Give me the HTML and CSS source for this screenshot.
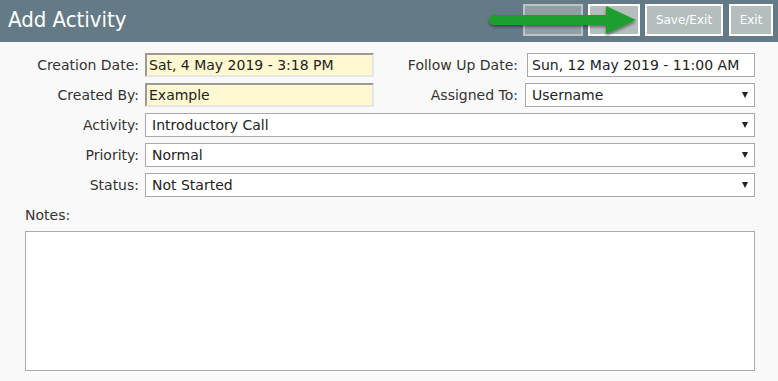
FILE: index.html
```html
<!DOCTYPE html>
<html lang="en">
<head>
    <meta charset="UTF-8">
    <meta name="viewport" content="width=device-width, initial-scale=1.0">
    <title>Add Activity</title>
    <link rel="stylesheet" href="styles.css">
</head>
<body>

    <header class="topbar">
        <h1 class="title">Add Activity</h1>
        <div class="actions">
            <button class="btn btn-faded btn-one"></button>
            <button class="btn btn-two"></button>
            <button class="btn btn-save">Save/Exit</button>
            <button class="btn btn-exit">Exit</button>
        </div>
        <!-- pointer drawn over the buttons -->
        <svg class="pointer" width="160" height="42" viewBox="0 0 160 42">
            <defs>
                <filter id="shade" x="-10%" y="-30%" width="120%" height="160%">
                    <feDropShadow dx="0" dy="2" stdDeviation="1.5" flood-color="#000" flood-opacity="0.45"/>
                </filter>
            </defs>
            <g filter="url(#shade)" fill="#1f9f2f">
                <path d="M14 15 H128 V25 H14 A5 5 0 0 1 14 15 Z"/>
                <polygon points="126,6 156,20 126,34"/>
            </g>
        </svg>
    </header>

    <main class="form">
        <div class="grid">
            <div class="lbl">Creation Date:</div>
            <div class="field field-ro">Sat, 4 May 2019 - 3:18 PM</div>
            <div class="lbl lbl-right">Follow Up Date:</div>
            <div class="field">Sun, 12 May 2019 - 11:00 AM</div>

            <div class="lbl">Created By:</div>
            <div class="field field-ro">Example</div>
            <div class="lbl lbl-right">Assigned To:</div>
            <div class="field select select-shift">Username</div>

            <div class="lbl">Activity:</div>
            <div class="field select wide">Introductory Call</div>

            <div class="lbl">Priority:</div>
            <div class="field select wide">Normal</div>

            <div class="lbl">Status:</div>
            <div class="field select wide">Not Started</div>
        </div>

        <section class="notes">
            <div class="notes-label">Notes:</div>
            <textarea class="notes-box"></textarea>
        </section>
    </main>

</body>
</html>
```

FILE: styles.css
```css
html {
    font-size: 14px;
}

body {
    margin: 0;
    background-color: #f9f9f9;
    color: #333;
    font-family: "DejaVu Sans", Verdana, sans-serif;
}

.topbar {
    position: relative;
    height: 42px;
    background-color: #647b87;
    display: flex;
    justify-content: space-between;
}

.title {
    margin: 0;
    padding-left: 8px;
    font-family: "DejaVu Sans Condensed", "DejaVu Sans", sans-serif;
    font-size: 22px;
    font-weight: normal;
    line-height: 39px;
    color: #fff;
}

.actions {
    display: flex;
    gap: 5px;
    padding: 4px 5px 0 0;
}

.btn {
    box-sizing: border-box;
    height: 32px;
    padding: 0;
    border: 2px solid #fff;
    background-color: #b4bebd;
    color: #fff;
    font-family: "DejaVu Sans", Verdana, sans-serif;
    font-size: 12px;
}

.btn-faded {
    opacity: 0.55;
}

.btn-one {
    width: 60px;
}

.btn-two {
    width: 52px;
}

.btn-save {
    width: 78px;
}

.btn-exit {
    width: 44px;
    margin-left: 1px;
}

.pointer {
    position: absolute;
    left: 480px;
    top: 0;
}

.form {
    padding: 11px 23px 0 25px;
}

.grid {
    display: grid;
    grid-template-columns: 120px 229px 153px 1fr;
    grid-auto-rows: 24px;
    row-gap: 6px;
}

.lbl {
    text-align: right;
    padding-right: 6px;
    line-height: 24px;
    white-space: nowrap;
}

.lbl-right {
    padding-right: 9px;
}

.field {
    box-sizing: border-box;
    height: 24px;
    display: flex;
    align-items: center;
    padding: 0 4px;
    border: 1px solid #a9a9a9;
    background-color: #fff;
    color: #222;
    white-space: nowrap;
}

.field-ro {
    padding-left: 2px;
    border-width: 2px;
    border-color: #9a9a9a #e6e6e6 #e6e6e6 #9a9a9a;
    background-color: #fff8d0;
}

.select {
    position: relative;
    padding-left: 6px;
}

.select::after {
    content: "";
    position: absolute;
    right: 6px;
    top: 8px;
    border-left: 3px solid transparent;
    border-right: 3px solid transparent;
    border-top: 6px solid #222;
}

.select-shift {
    margin-left: -2px;
}

.wide {
    grid-column: 2 / 5;
}

.notes {
    margin-top: 10px;
}

.notes-label {
    line-height: 17px;
    margin-bottom: 7px;
}

.notes-box {
    display: block;
    box-sizing: border-box;
    width: 100%;
    height: 140px;
    margin: 0;
    border: 1px solid #aaa;
    background-color: #fff;
    resize: none;
}
```
